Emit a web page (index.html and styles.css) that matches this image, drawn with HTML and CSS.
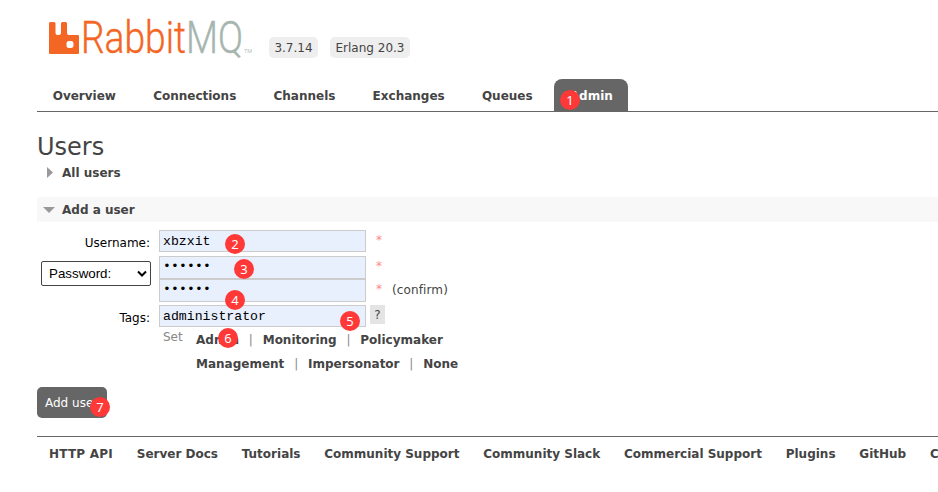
FILE: index.html
```html
<!DOCTYPE html>
<html lang="en">
<head>
<meta charset="utf-8">
<title>RabbitMQ Management</title>
<link rel="stylesheet" href="styles.css">
</head>
<body>
<header class="head">
  <svg class="logo" width="206" height="36" viewBox="0 0 206 36" role="img" aria-label="RabbitMQ">
    <path class="mark" fill-rule="evenodd" d="M1.500 2H5q1.500 0 1.500 1.500V13q0 2 2 2H10q2 0 2-2V3.500Q12 2 13.500 2H16.500Q18 2 18 3.500V13q0 2 2 2h9q1 0 1 1V33q0 1-1 1H1q-1 0-1-1V3.500Q0 2 1.500 2zM20 21q-2.500 0-2.500 2.500v2q0 2.500 2.500 2.500h2.500q2-.5 2-2.500v-2q0-2.500-2-2.500z"/>
    <text class="word orange" x="32" y="33" textLength="105" lengthAdjust="spacingAndGlyphs">Rabbit</text>
    <text class="word gray" x="137" y="33" textLength="57" lengthAdjust="spacingAndGlyphs">MQ</text>
    <text class="tm" x="195" y="33" textLength="8" lengthAdjust="spacingAndGlyphs">TM</text>
  </svg>
  <span class="version v1">3.7.14</span>
  <span class="version v2">Erlang 20.3</span>
</header>
<nav class="tabs">
  <a>Overview</a><a>Connections</a><a>Channels</a><a>Exchanges</a><a>Queues</a><a class="selected">Admin</a>
</nav>
<main>
  <h1>Users</h1>
  <h2 class="closed"><svg width="12" height="12"><path d="M4 0L10 5.500L4 11z"/></svg>All users</h2>
  <h2 class="open"><svg width="12" height="12"><path d="M0 3H12L6 9z"/></svg>Add a user</h2>
  <form class="form">
    <div class="row username"><label>Username:</label><input type="text" value="xbzxit"><span class="star">*</span></div>
    <div class="row password">
      <div class="select">Password:<svg width="10" height="8"><path d="M1 1.500L5 5.500L9 1.500"/></svg></div>
      <div>
        <div class="line"><div class="field dots"><span>••••••</span></div><span class="star">*</span></div>
        <div class="line"><div class="field dots"><span>••••••</span></div><span class="star">*</span><span class="confirm">(confirm)</span></div>
      </div>
    </div>
    <div class="row tagrow"><label>Tags:</label><input type="text" value="administrator"><span class="help">?</span></div>
    <div class="sets">
      <span class="set">Set</span>
      <div class="options">
        <p><b>Admin</b><i>|</i><b>Monitoring</b><i>|</i><b>Policymaker</b></p>
        <p><b>Management</b><i>|</i><b>Impersonator</b><i>|</i><b>None</b></p>
      </div>
    </div>
    <button type="button">Add user</button>
  </form>
</main>
<footer><a class="api">HTTP API</a><a>Server Docs</a><a>Tutorials</a><a>Community Support</a><a>Community Slack</a><a>Commercial Support</a><a>Plugins</a><a>GitHub</a><a>Changelog</a></footer>
<span class="pin p1">1</span><span class="pin p2">2</span><span class="pin p3">3</span><span class="pin p4">4</span><span class="pin p5">5</span><span class="pin p6">6</span><span class="pin p7">7</span>
</body>
</html>
```
FILE: styles.css
```css
* { box-sizing: border-box; }
body { margin: 0; padding: 20px 0 0 37px; height: 492px; position: relative; overflow: hidden; background: #fff; color: #444; font: 12px/16px "DejaVu Sans", Verdana, sans-serif; }
.head { display: flex; height: 59px; padding-left: 12px; }
.logo { display: block; overflow: visible; }
.mark, .orange { fill: #f46623; }
.word { font: 300 43.5px Roboto, sans-serif; stroke-width: .4; }
.orange { stroke: #f46623; }
.gray { fill: #a7b5af; stroke: #a7b5af; }
.tm { font: 6px Roboto, sans-serif; fill: #b5c0bb; }
.version { height: 21px; margin-top: 17px; border-radius: 5px; background: #eee; line-height: 22px; text-align: center; white-space: nowrap; }
.v1 { width: 49px; margin-left: 14px; }
.v2 { width: 80px; margin-left: 12px; }
.tabs { display: flex; height: 33px; border-bottom: 1px solid #666; font-weight: bold; }
.tabs a { padding: 0 16px 0 15.7px; margin-right: 5.5px; line-height: 34px; white-space: nowrap; }
.tabs .selected { margin-right: 0; width: 74px; border-radius: 8px 8px 0 0; background: #666; color: #fff; }
h1 { margin: 20px 0 0; font-size: 24px; line-height: 30px; font-weight: normal; }
h2 { display: flex; align-items: center; margin: 0; height: 25px; font-size: 12px; padding-left: 6px; }
h2 svg { margin-right: 7px; fill: #999; }
.closed { margin-top: -2px; }
.open { margin-top: 12px; background: #f8f8f8; }
.row { display: flex; color: #000; }
.username { height: 22px; margin-top: 8px; }
.row label { width: 122px; padding-right: 9px; text-align: right; line-height: 26px; }
input, .field { display: block; width: 207px; height: 22px; margin: 0; padding: 0 3px; border: 1px solid #ccc; border-radius: 0; background: #e8f0fe; color: #000; font: 13.2px/20px "Liberation Mono", monospace; }
.star { width: 27px; padding-left: 10px; color: #f88; line-height: 20px; }
.password { margin-top: 4px; }
.select { display: flex; align-items: center; justify-content: space-between; width: 110px; height: 25px; margin: 5px 8px 0 4px; padding: 0 3px 0 7px; border: 1px solid #444; border-radius: 2px; font: 13.333px "Liberation Sans", sans-serif; }
.select svg { fill: none; stroke: #000; stroke-width: 2; }
.line { display: flex; height: 22.5px; }
.field { height: 23px; }
.dots span { display: block; font: 13px/20px "Liberation Mono", monospace; letter-spacing: .2px; }
.confirm { margin-left: -1px; color: #444; letter-spacing: .12px; line-height: 23px; }
.tagrow { height: 22px; margin-top: 4px; }
.help { width: 15px; height: 19px; margin-left: 4px; background: #e4e4e4; color: #444; text-align: center; line-height: 20px; }
.sets { display: flex; height: 48px; margin-top: 1px; }
.set { width: 33px; margin: 0 0 0 126px; color: #888; line-height: 18px; }
.options p { margin: 0; height: 24px; line-height: 24px; white-space: nowrap; }
.options i { margin: 0 9.8px; color: #888; font-style: normal; }
button { display: block; width: 70px; height: 31px; margin: 11px 0 18px; padding: 0 0 0 8px; border: 0; border-radius: 5px; background: #666; color: #fff; font: inherit; text-align: left; white-space: nowrap; }
footer { display: flex; gap: 23.75px; padding-left: 12px; border-top: 1px solid #666; font-weight: bold; line-height: 34px; white-space: nowrap; }
.api { letter-spacing: .22px; }
.pin { position: absolute; width: 20px; height: 20px; border-radius: 50%; background: #ff3838; color: #fff; text-align: center; font: 13px/20px "Noto Sans", sans-serif; }
.p1 { left: 560px; top: 90px; }
.p2 { left: 225px; top: 234px; }
.p3 { left: 234px; top: 259px; }
.p4 { left: 225px; top: 290px; }
.p5 { left: 340px; top: 311px; }
.p6 { left: 218px; top: 328px; }
.p7 { left: 90px; top: 397px; }
```
